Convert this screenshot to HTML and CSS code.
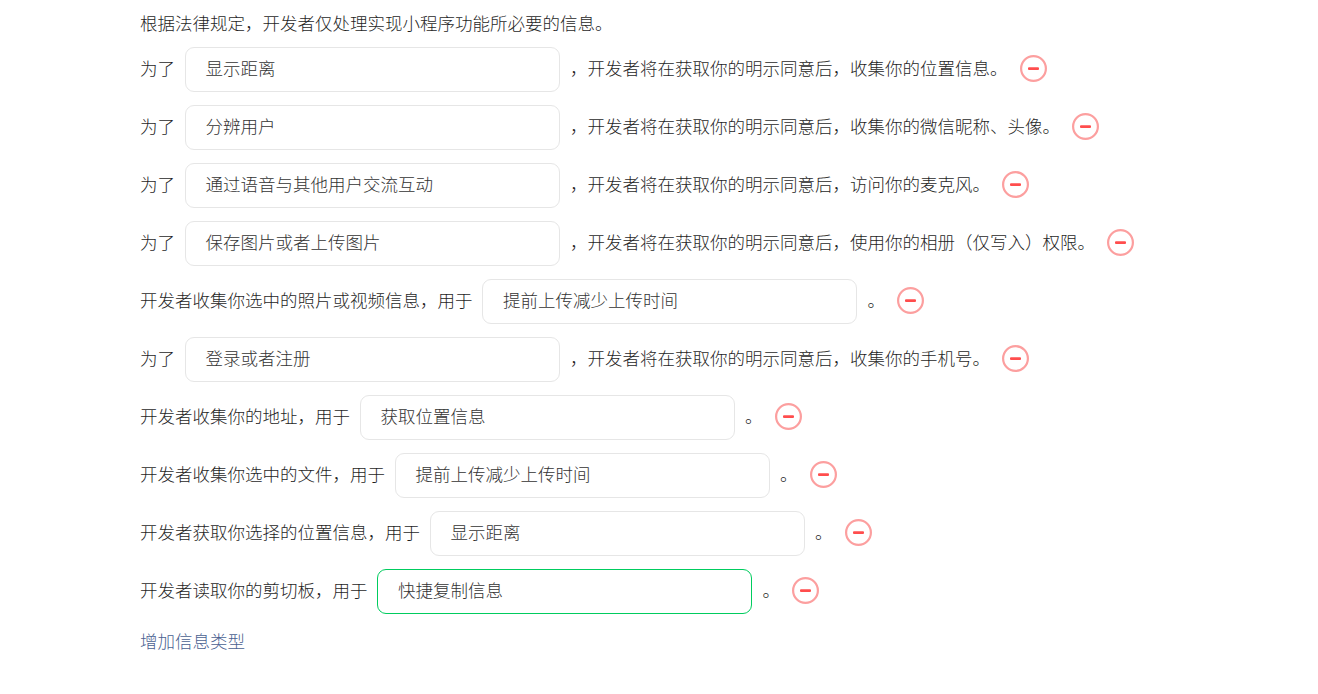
FILE: index.html
```html
<!DOCTYPE html>
<html lang="zh">
<head>
<meta charset="utf-8">
<title>信息类型</title>
<link rel="stylesheet" href="styles.css">
</head>
<body>
<svg class="defs" width="0" height="0" aria-hidden="true"><symbol id="minus" viewBox="0 0 27 27"><circle cx="13.5" cy="13.5" r="12.4" fill="#fff" stroke="#fc9f9f" stroke-width="2.2"/><rect x="8" y="12.2" width="11" height="2.8" rx="1" fill="#ff4d4d"/></symbol></svg>
<main class="form">
  <p class="intro">根据法律规定，开发者仅处理实现小程序功能所必要的信息。</p>
  <div class="row"><span class="txt">为了</span><div class="field">显示距离</div><span class="txt">，开发者将在获取你的明示同意后，收集你的位置信息。</span><svg class="del"><use href="#minus"/></svg></div>
  <div class="row"><span class="txt">为了</span><div class="field">分辨用户</div><span class="txt">，开发者将在获取你的明示同意后，收集你的微信昵称、头像。</span><svg class="del"><use href="#minus"/></svg></div>
  <div class="row"><span class="txt">为了</span><div class="field">通过语音与其他用户交流互动</div><span class="txt">，开发者将在获取你的明示同意后，访问你的麦克风。</span><svg class="del"><use href="#minus"/></svg></div>
  <div class="row"><span class="txt">为了</span><div class="field">保存图片或者上传图片</div><span class="txt">，开发者将在获取你的明示同意后，使用你的相册（仅写入）权限。</span><svg class="del"><use href="#minus"/></svg></div>
  <div class="row"><span class="txt">开发者收集你选中的照片或视频信息，用于</span><div class="field">提前上传减少上传时间</div><span class="txt">。</span><svg class="del"><use href="#minus"/></svg></div>
  <div class="row"><span class="txt">为了</span><div class="field">登录或者注册</div><span class="txt">，开发者将在获取你的明示同意后，收集你的手机号。</span><svg class="del"><use href="#minus"/></svg></div>
  <div class="row"><span class="txt">开发者收集你的地址，用于</span><div class="field">获取位置信息</div><span class="txt">。</span><svg class="del"><use href="#minus"/></svg></div>
  <div class="row"><span class="txt">开发者收集你选中的文件，用于</span><div class="field">提前上传减少上传时间</div><span class="txt">。</span><svg class="del"><use href="#minus"/></svg></div>
  <div class="row"><span class="txt">开发者获取你选择的位置信息，用于</span><div class="field">显示距离</div><span class="txt">。</span><svg class="del"><use href="#minus"/></svg></div>
  <div class="row"><span class="txt">开发者读取你的剪切板，用于</span><div class="field focused">快捷复制信息</div><span class="txt">。</span><svg class="del"><use href="#minus"/></svg></div>
  <a class="add" href="#">增加信息类型</a>
</main>
</body>
</html>
```
FILE: styles.css
```css
html, body {
  margin: 0;
  background: #fff;
}
body {
  font-family: "Noto Sans CJK SC", "Liberation Sans", sans-serif;
  font-size: 17.5px;
  font-weight: 300;
  color: #1f1f1f;
}
.defs {
  display: block;
}
.form {
  padding: 10px 0 0 140px;
}
.intro {
  margin: 0 0 12px;
  line-height: 25px;
}
.row {
  display: flex;
  align-items: center;
  height: 45px;
  margin-bottom: 13px;
  white-space: nowrap;
}
.txt {
  padding-bottom: 4px;
}
.field {
  box-sizing: border-box;
  width: 375px;
  height: 45px;
  margin: 0 10.5px 0 9.5px;
  padding: 0 20px;
  line-height: 39px;
  border: 1px solid #e6e6e6;
  border-radius: 9px;
  color: #333;
}
.field.focused {
  border-color: #00cc5e;
}
.del {
  width: 27px;
  height: 27px;
  margin: 0 0 3px 12px;
  flex: none;
}
.add {
  display: block;
  margin-top: 14px;
  line-height: 25px;
  color: #4a6191;
  text-decoration: none;
}
```
